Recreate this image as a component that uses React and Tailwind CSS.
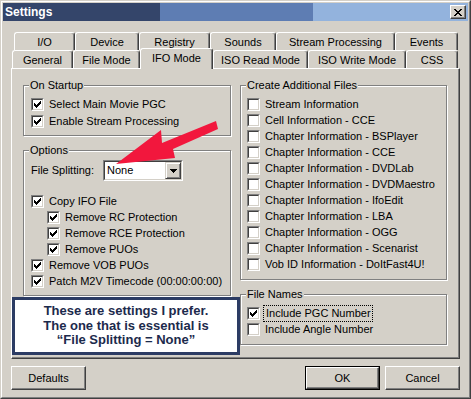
import React from 'react';

// Win2000 style settings dialog

const CHECK_D =
  'M6 0h1v1h-1z M5 1h2v1h-2z M0 2h1v1h-1z M4 2h3v1h-3z M0 3h2v1h-2z M3 3h3v1h-3z M0 4h5v1h-5z M1 5h3v1h-3z M2 6h1v1h-1z';

function Check({ on }) {
  return (
    <span className="block w-[13px] h-[13px] shrink-0 border border-t-[#808080] border-l-[#808080] border-r-white border-b-white">
      <span className="block w-[11px] h-[11px] bg-white border border-t-[#404040] border-l-[#404040] border-r-[#d4d0c8] border-b-[#d4d0c8]">
        {on && (
          <svg width="9" height="9" viewBox="0 0 9 9" shapeRendering="crispEdges" className="block">
            <path d={CHECK_D} transform="translate(1 1)" fill="#000" />
          </svg>
        )}
      </span>
    </span>
  );
}

function Row({ on, label, indent, focus }) {
  return (
    <div className={`flex items-start h-[13px] ${indent ? 'pl-[16px]' : ''}`}>
      <Check on={on} />
      <span className={`ml-[5px] leading-[13px] whitespace-nowrap ${focus ? 'outline outline-1 outline-dotted outline-black outline-offset-[1px] -ml-[1px] pl-[1px]' : ''}`}>
        {label}
      </span>
    </div>
  );
}

function Group({ title, className, children }) {
  return (
    <div className={`relative border border-[#808080] shadow-[inset_1px_1px_0_#fff,1px_1px_0_#fff] ${className}`}>
      <span className="absolute -top-[7px] left-[5px] px-[1px] bg-[#d4d0c8] leading-[13px] whitespace-nowrap">
        {title}
      </span>
      {children}
    </div>
  );
}

function Tab({ label, w, selected }) {
  if (selected) {
    return (
      <div
        className={`${w} h-[21px] -mt-[2px] relative z-10 bg-[#d4d0c8] flex justify-center pt-[3px] leading-[13px] border-t border-l border-white border-r border-r-[#404040] rounded-t-[3px] shadow-[inset_-1px_0_0_#808080]`}
      >
        {label}
      </div>
    );
  }
  return (
    <div
      className={`${w} h-[18px] flex justify-center pt-[3px] leading-[13px] whitespace-nowrap border-t border-l border-white border-r border-r-[#404040] rounded-t-[3px] shadow-[inset_-1px_0_0_#808080]`}
    >
      {label}
    </div>
  );
}

function Button({ label, isDefault }) {
  const inner = (
    <div className="w-full h-full flex items-center justify-center border border-t-white border-l-white border-r-[#404040] border-b-[#404040] shadow-[inset_-1px_-1px_0_#808080]">
      {label}
    </div>
  );
  if (isDefault) {
    return <div className="w-[75px] h-[24px] border border-black">{inner}</div>;
  }
  return <div className="w-[75px] h-[24px]">{inner}</div>;
}

export default function App() {
  const extra = [
    'Stream Information',
    'Cell Information - CCE',
    'Chapter Information - BSPlayer',
    'Chapter Information - CCE',
    'Chapter Information - DVDLab',
    'Chapter Information - DVDMaestro',
    'Chapter Information - IfoEdit',
    'Chapter Information - LBA',
    'Chapter Information - OGG',
    'Chapter Information - Scenarist',
    'Vob ID Information - DoItFast4U!',
  ];

  return (
    <div className="relative w-[471px] h-[399px] overflow-hidden bg-[#d4d0c8] text-black text-[11px] font-['Liberation_Sans',Arial,sans-serif] border border-t-[#d4d0c8] border-l-[#d4d0c8] border-r-[#404040] border-b-[#404040]">
      <div className="w-full h-full border border-t-white border-l-white border-r-[#808080] border-b-[#808080] p-[1px]">
        {/* TITLE BAR */}
        <div className="h-[18px] flex items-center justify-between pl-[2px] pr-[2px] bg-[linear-gradient(to_right,#34456a_0px,#34456a_157px,#5e7db3_157px,#5e7db3_310px,#93b3dd_310px,#93b3dd_100%)]">
          <span className="text-white font-bold text-[12px] leading-[14px]">Settings</span>
          <div className="w-[16px] h-[14px] border border-t-white border-l-white border-r-[#404040] border-b-[#404040] bg-[#d4d0c8] shadow-[inset_-1px_-1px_0_#808080] flex items-center justify-center">
            <svg width="8" height="7" viewBox="0 0 8 7" shapeRendering="crispEdges">
              <path
                d="M0 0h2v1h-2z M6 0h2v1h-2z M1 1h2v1h-2z M5 1h2v1h-2z M2 2h4v1h-4z M3 3h2v1h-2z M2 4h4v1h-4z M1 5h2v1h-2z M5 5h2v1h-2z M0 6h2v1h-2z M6 6h2v1h-2z"
                fill="#000"
              />
            </svg>
          </div>
        </div>

        {/* TABS */}
        <div className="mt-[11px] flex pl-[11px] h-[18px]">
          <Tab label="I/O" w="w-[61px]" />
          <Tab label="Device" w="w-[64px]" />
          <Tab label="Registry" w="w-[71px]" />
          <Tab label="Sounds" w="w-[66px]" />
          <Tab label="Stream Processing" w="w-[119px]" />
          <Tab label="Events" w="w-[63px]" />
        </div>
        <div className="flex items-start pl-[9px] h-[18px]">
          <Tab label="General" w="w-[61px]" />
          <Tab label="File Mode" w="w-[67px]" />
          <Tab label="IFO Mode" w="w-[73px]" selected />
          <Tab label="ISO Read Mode" w="w-[95px]" />
          <Tab label="ISO Write Mode" w="w-[98px]" />
          <Tab label="CSS" w="w-[52px]" />
        </div>

        {/* PANEL */}
        <div className="ml-[8px] w-[449px] h-[291px] border border-t-white border-l-white border-r-[#404040] border-b-[#404040] shadow-[inset_-1px_-1px_0_#808080] flex gap-[9px] pl-[11px] pt-[16px]">
          <div className="w-[208px] flex flex-col">
            <Group title="On Startup" className="h-[51px] pt-[12px] pl-[7px] flex flex-col gap-[4px]">
              <Row on label="Select Main Movie PGC" />
              <Row on label="Enable Stream Processing" />
            </Group>

            <Group title="Options" className="mt-[14px] h-[146px] pt-[9px] pl-[7px]">
              <div className="flex items-center h-[21px]">
                <span className="w-[72px] whitespace-nowrap">File Splitting:</span>
                <div className="w-[80px] h-[21px] border border-t-[#808080] border-l-[#808080] border-r-white border-b-white">
                  <div className="w-full h-full bg-white border border-t-[#404040] border-l-[#404040] border-r-[#d4d0c8] border-b-[#d4d0c8] flex items-center justify-between">
                    <span className="pl-[2px]">None</span>
                    <div className="w-[16px] h-[17px] bg-[#d4d0c8] border border-t-[#d4d0c8] border-l-[#d4d0c8] border-r-[#404040] border-b-[#404040] shadow-[inset_1px_1px_0_#fff,inset_-1px_-1px_0_#808080] flex items-center justify-center">
                      <svg width="7" height="4" viewBox="0 0 7 4" shapeRendering="crispEdges">
                        <path d="M0 0h7v1h-7z M1 1h5v1h-5z M2 2h3v1h-3z M3 3h1v1h-1z" fill="#000" />
                      </svg>
                    </div>
                  </div>
                </div>
              </div>
              <div className="mt-[14px] flex flex-col gap-[3px]">
                <Row on label="Copy IFO File" />
                <Row on indent label="Remove RC Protection" />
                <Row on indent label="Remove RCE Protection" />
                <Row on indent label="Remove PUOs" />
                <Row on label="Remove VOB PUOs" />
                <Row on label="Patch M2V Timecode (00:00:00:00)" />
              </div>
            </Group>

            {/* NOTE */}
            <div className="mt-[1px] -ml-[11px] w-[228px] h-[58px] shrink-0 bg-white border-[3px] border-[#2c3c64] flex flex-col items-center justify-center font-['Liberation_Sans',Arial,sans-serif] font-bold text-[13px] leading-[14.5px] text-[#1c2a4c]">
              <span>These are settings I prefer.</span>
              <span>The one that is essential is</span>
              <span>“File Splitting = None”</span>
            </div>
          </div>

          <div className="w-[207px] flex flex-col">
            <Group title="Create Additional Files" className="h-[195px] pt-[12px] pl-[6px] flex flex-col gap-[3px]">
              {extra.map((t) => (
                <Row key={t} label={t} />
              ))}
            </Group>
            <Group title="File Names" className="mt-[14px] h-[51px] pt-[12px] pl-[6px] flex flex-col gap-[3px]">
              <Row on focus label="Include PGC Number" />
              <Row label="Include Angle Number" />
            </Group>
          </div>
        </div>

        {/* BUTTONS */}
        <div className="mt-[7px] ml-[8px] w-[449px] flex">
          <Button label="Defaults" />
          <div className="ml-auto flex gap-[5px]">
            <Button label="OK" isDefault />
            <Button label="Cancel" />
          </div>
        </div>
      </div>

      {/* red annotation arrow */}
      <svg className="absolute top-0 left-0 pointer-events-none" width="471" height="399" viewBox="0 0 471 399">
        <polygon points="115,163 160,129 161,142 215,120 217,128 172,148 174,157" fill="#f2173d" />
      </svg>
    </div>
  );
}
